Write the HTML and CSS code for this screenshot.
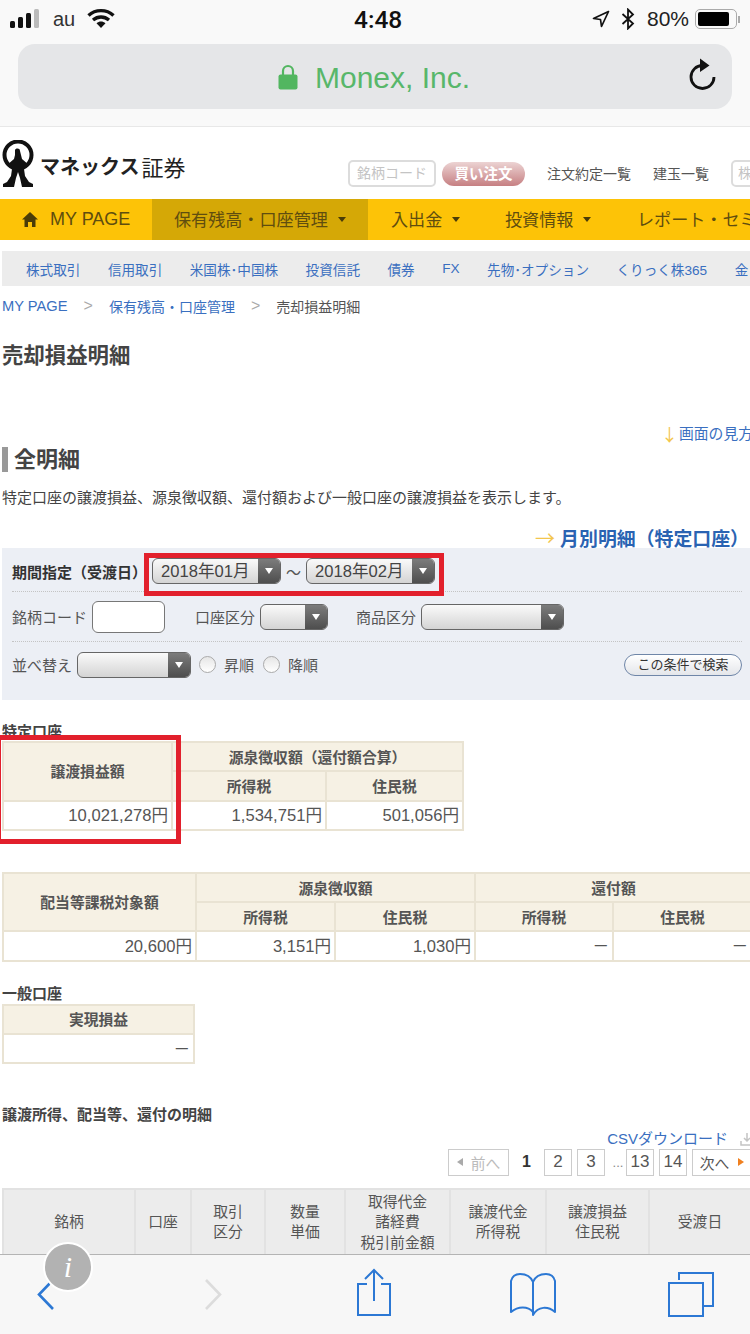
FILE: index.html
```html
<!DOCTYPE html>
<html lang="ja">
<head>
<meta charset="utf-8">
<title>売却損益明細</title>
<link rel="stylesheet" href="styles.css">
</head>
<body>
<div class="phone">
  <header class="chrome">
    <div class="status">
      <div class="status-left">
        <svg class="signal" width="30" height="20" viewBox="0 0 30 20"><rect x="0" y="12" width="5" height="7" rx="1.5" fill="#111"/><rect x="8" y="8" width="5" height="11" rx="1.5" fill="#111"/><rect x="16" y="4" width="5" height="15" rx="1.5" fill="#111"/><rect x="24" y="0" width="5" height="19" rx="1.5" fill="#bbb"/></svg>
        <span class="carrier">au</span>
        <svg class="wifi" width="28" height="20" viewBox="0 0 28 20"><path d="M1.5 7.5C8.5 1 19.5 1 26.5 7.5" fill="none" stroke="#111" stroke-width="3.4"/><path d="M6 12C10.800 8 17.200 8 22 12" fill="none" stroke="#111" stroke-width="3.400"/><path d="M9.500 15.200C12.300 13 15.700 13 18.500 15.200L14 20Z" fill="#111"/></svg>
      </div>
      <span class="clock">4:48</span>
      <div class="status-right">
        <svg width="18" height="18" viewBox="0 0 18 18"><path d="M16.500 1.500L1.500 8.500L8.500 9.500L9.500 16.500Z" fill="none" stroke="#111" stroke-width="1.700" stroke-linejoin="round"/></svg>
        <svg class="bt" width="14" height="22" viewBox="0 0 14 22"><path d="M1.500 6L12 15.500L7 20.500V1.500L12 6.500L1.500 16" fill="none" stroke="#111" stroke-width="1.800"/></svg>
        <span class="pct">80%</span>
        <div class="battery"><div class="battery-fill"></div></div>
        <span class="battery-tip"></span>
      </div>
    </div>
    <div class="urlbar">
      <div class="url-center">
        <svg width="20" height="26" viewBox="0 0 20 26"><path d="M5 11V7a5 5 0 0 1 10 0v4" fill="none" stroke="#52b660" stroke-width="2.200"/><rect x="0.500" y="10.500" width="19" height="15" rx="2" fill="#52b660"/></svg>
        <span class="url-text">Monex, Inc.</span>
      </div>
      <svg class="reload" width="30" height="34" viewBox="0 0 30 34"><path d="M15.500 7.500A11.500 11.500 0 1 0 27 19" fill="none" stroke="#111" stroke-width="2.800"/><path d="M13 0.500L22.500 7.500L13 14Z" fill="#111"/></svg>
    </div>
  </header>

  <main class="page">
    <div class="top">
      <div class="logo">
        <svg width="36" height="48" viewBox="0 0 36 48"><circle cx="18" cy="15" r="13.500" fill="none" stroke="#111" stroke-width="4"/><path d="M15 10C16 8 20 8 20 11L21 15L22 19L29 25L24 29L25 36L29 42L33 44V47H22L20 38L18 32L16 38L14 47H3V44L7 42L11 36L12 29L7 25L14 19L15 15Z" fill="#111"/></svg>
        <span class="logo-kana">マネックス</span><span class="logo-kanji">証券</span>
      </div>
      <div class="top-tools">
        <div class="code-box">銘柄コード</div>
        <div class="buy">買い注文</div>
        <a class="top-link first">注文約定一覧</a>
        <a class="top-link second">建玉一覧</a>
        <div class="code-box cut">株</div>
      </div>
    </div>

    <nav class="gnav">
      <div class="gnav-item home">
        <svg width="16" height="15" viewBox="0 0 16 15"><path d="M8 0L16 7.500H13.500V15H10V10H6V15H2.500V7.500H0Z" fill="#4a3c08"/></svg>
        <span>MY PAGE</span>
      </div>
      <div class="gnav-item active"><span>保有残高・口座管理</span><i class="caret"></i></div>
      <div class="gnav-item money"><span>入出金</span><i class="caret"></i></div>
      <div class="gnav-item info"><span>投資情報</span><i class="caret"></i></div>
      <div class="gnav-item report"><span>レポート・セミ</span></div>
    </nav>

    <nav class="subnav">
      <a>株式取引</a><a>信用取引</a><a>米国株･中国株</a><a>投資信託</a><a>債券</a><a>FX</a><a>先物･オプション</a><a>くりっく株365</a><a>金</a>
    </nav>

    <div class="crumbs">
      <a class="crumb-en">MY PAGE</a><span class="sep">&gt;</span><a>保有残高・口座管理</a><span class="sep">&gt;</span><span>売却損益明細</span>
    </div>

    <h1 class="title">売却損益明細</h1>

    <div class="howto"><span class="arrow-y">↓</span><a>画面の見方</a></div>

    <h2 class="section"><span>全明細</span></h2>
    <p class="lead">特定口座の譲渡損益、源泉徴収額、還付額および一般口座の譲渡損益を表示します。</p>

    <div class="monthly"><span class="arrow-y">→</span><a>月別明細（特定口座）</a></div>

    <section class="filter">
      <div class="f-row r1">
        <b class="f-date">期間指定（受渡日）</b>
        <div class="sel w129"><span>2018年01月</span><i><u></u></i></div>
        <span class="tilde">～</span>
        <div class="sel w129"><span>2018年02月</span><i><u></u></i></div>
      </div>
      <div class="f-row r2">
        <span>銘柄コード</span>
        <div class="input"></div>
        <span class="ml30">口座区分</span>
        <div class="sel w68"><span></span><i><u></u></i></div>
        <span class="ml28">商品区分</span>
        <div class="sel w143"><span></span><i><u></u></i></div>
      </div>
      <div class="f-row r3">
        <span>並べ替え</span>
        <div class="sel w114"><span></span><i><u></u></i></div>
        <i class="radio"></i><span>昇順</span>
        <i class="radio ml9"></i><span>降順</span>
        <div class="search-btn">この条件で検索</div>
      </div>
    </section>

    <div class="cap cap1">特定口座</div>
    <table class="tbl t1">
      <colgroup><col class="c169"><col class="c154"><col class="c137"></colgroup>
      <tr><th rowspan="2">譲渡損益額</th><th colspan="2">源泉徴収額（還付額合算）</th></tr>
      <tr><th>所得税</th><th>住民税</th></tr>
      <tr><td>10,021,278円</td><td>1,534,751円</td><td>501,056円</td></tr>
    </table>

    <table class="tbl t2">
      <colgroup><col class="c193"><col class="c139"><col class="c140"><col class="c138"><col class="c139"></colgroup>
      <tr><th rowspan="2">配当等課税対象額</th><th colspan="2">源泉徴収額</th><th colspan="2">還付額</th></tr>
      <tr><th>所得税</th><th>住民税</th><th>所得税</th><th>住民税</th></tr>
      <tr><td>20,600円</td><td>3,151円</td><td>1,030円</td><td>－</td><td>－</td></tr>
    </table>

    <div class="cap cap2">一般口座</div>
    <table class="tbl t3">
      <colgroup><col class="c191"></colgroup>
      <tr><th>実現損益</th></tr>
      <tr><td>－</td></tr>
    </table>

    <div class="cap cap3">譲渡所得、配当等、還付の明細</div>
    <div class="csv"><a>CSVダウンロード</a>
      <svg width="14" height="14" viewBox="0 0 14 14"><path d="M7 1V9M4 6L7 9L10 6M1 9V13H13V9" fill="none" stroke="#c4c4c4" stroke-width="1.500"/></svg>
    </div>
    <div class="pager">
      <div class="pg prev"><i class="tri-l"></i><span>前へ</span></div>
      <b class="cur">1</b>
      <div class="pg num">2</div>
      <div class="pg num">3</div>
      <span class="dots">...</span>
      <div class="pg num">13</div>
      <div class="pg num">14</div>
      <div class="pg next"><span>次へ</span><i class="tri-r"></i></div>
    </div>

    <table class="list">
      <colgroup><col class="l132"><col class="l56"><col class="l74"><col class="l80"><col class="l105"><col class="l96"><col class="l103"><col class="l102"></colgroup>
      <tr>
        <th>銘柄</th><th>口座</th><th>取引<br>区分</th><th>数量<br>単価</th><th>取得代金<br>諸経費<br>税引前金額</th><th>譲渡代金<br>所得税</th><th>譲渡損益<br>住民税</th><th>受渡日</th>
      </tr>
    </table>

    <div class="redbox rb1"></div>
    <div class="redbox rb2"></div>
  </main>

  <footer class="toolbar">
    <svg class="tb-back" width="20" height="34" viewBox="0 0 20 34"><path d="M17 2L3 16.500L17 31" fill="none" stroke="#2c78d4" stroke-width="2.600"/></svg>
    <svg class="tb-fwd" width="20" height="34" viewBox="0 0 20 34"><path d="M3 2L17 16.500L3 31" fill="none" stroke="#dcdcdc" stroke-width="2.600"/></svg>
    <svg class="tb-share" width="36" height="50" viewBox="0 0 36 50"><path d="M11 16H2V47H34V16H25M18 33V3M9 11L18 2L27 11" fill="none" stroke="#2c78d4" stroke-width="2"/></svg>
    <svg class="tb-book" width="48" height="46" viewBox="0 0 48 46"><path d="M24 40C19 34 9 34 2 40V9C3 5 6 2 11 2C17 2 22 5 24 10C26 5 31 2 37 2C42 2 45 5 46 9V40C39 34 29 34 24 43C24 42 24 41 24 40ZM24 10V42" fill="none" stroke="#2c78d4" stroke-width="2" stroke-linejoin="round"/></svg>
    <svg class="tb-tabs" width="46" height="46" viewBox="0 0 46 46"><path d="M11 9V2H45V35H36" fill="none" stroke="#2c78d4" stroke-width="2"/><rect x="1" y="12" width="34" height="33" fill="none" stroke="#2c78d4" stroke-width="2"/></svg>
    <div class="info-badge">i</div>
  </footer>
</div>
</body>
</html>
```

FILE: styles.css
```css
* { box-sizing: border-box; }
html, body { margin: 0; padding: 0; }
body {
  width: 750px;
  height: 1334px;
  overflow: hidden;
  background: #fff;
  color: #4a4a4a;
  font-family: "Liberation Sans", "Noto Sans CJK JP", sans-serif;
}
.phone { position: relative; display: flex; flex-direction: column; width: 750px; height: 1334px; overflow: hidden; }
a { color: #3a6fc0; text-decoration: none; }

/* browser chrome */
.chrome { flex: none; height: 127px; background: #f9f9f9; border-bottom: 1px solid #e8e8e8; padding: 0 18px; }
.status { display: flex; justify-content: space-between; align-items: center; height: 38px; position: relative; margin: 0 -18px; padding: 0 10px 0 10px; }
.status-left { display: flex; align-items: center; }
.signal { margin-right: 13px; }
.carrier { font-size: 20px; color: #333; margin-right: 12px; }
.wifi { margin-top: -3px; }
.clock { position: absolute; left: 354px; top: 5px; font-family: "Roboto", sans-serif; font-weight: 500; font-size: 24.500px; color: #111; }
.status-right { display: flex; align-items: center; }
.status-right .bt { margin: 0 12px 0 11px; }
.pct { font-size: 21px; color: #222; margin-right: 6px; }
.battery { width: 42px; height: 20px; border: 1.500px solid #aaa; border-radius: 5px; padding: 2px 7px 2px 2px; }
.battery-fill { width: 100%; height: 100%; background: #000; border-radius: 2px; }
.battery-tip { width: 2px; height: 7px; background: #aaa; margin-left: 1px; }
.urlbar { position: relative; display: flex; justify-content: center; align-items: center; height: 65px; margin-top: 6px; background: #e5e6e8; border-radius: 17px; }
.url-center { display: flex; align-items: center; gap: 17px; margin-left: -2px; }
.url-text { font-size: 30px; color: #58b76a; margin-top: 2px; }
.reload { position: absolute; right: 15px; top: 14px; }

/* page */
.page { position: relative; flex: 1; min-height: 0; overflow: hidden; }
.top { display: flex; height: 72px; }
.logo { display: flex; align-items: center; flex: none; width: 348px; padding-bottom: 3px; color: #222; }
.logo svg { margin: 5px 4px 0 0; flex: none; }
.logo-kana { font-size: 20px; font-weight: 700; margin-top: 8px; }
.logo-kanji { font-size: 22px; margin-top: 8px; margin-left: 2px; }
.top-tools { display: flex; align-items: center; flex: none; padding-top: 20px; white-space: nowrap; }
.code-box { width: 88px; height: 27px; border: 2px solid #dcdcdc; border-radius: 5px; font-size: 14px; line-height: 23px; color: #c4c4c4; text-align: center; flex: none; }
.code-box.cut { width: 40px; margin-left: 22px; padding-right: 12px; }
.buy { width: 83px; height: 24px; margin-left: 6px; border-radius: 12px; background: linear-gradient(#ecd3d3, #c67f82); color: #fff; font-size: 14.500px; font-weight: 700; line-height: 25px; text-align: center; margin-top: 2px; flex: none; }
.top-link { font-size: 14px; color: #555; }
.top-link.first { margin-left: 22px; }
.top-link.second { margin-left: 22px; }

.gnav { display: flex; height: 41px; background: #fdc307; color: #5f4d0f; font-size: 17.100px; white-space: nowrap; }
.gnav-item { display: flex; align-items: center; flex: none; padding-bottom: 3px; }
.gnav-item .caret { display: block; width: 0; height: 0; border: 4.500px solid transparent; border-top: 5.500px solid #4a3c08; border-bottom: 0; margin-left: 10px; margin-top: 2px; }
.home { width: 152px; padding-left: 22px; gap: 12px; font-size: 18px; padding-bottom: 0; }
.active { width: 216px; padding-left: 22px; background: #d5a806; }
.money { width: 137px; padding-left: 23px; }
.info { width: 132px; padding-left: 0; }
.report { padding-left: 0; }

.subnav { display: flex; gap: 27.500px; height: 35px; margin: 11px 0 0 2px; padding-left: 24px; background: #ececec; align-items: center; font-size: 13.600px; white-space: nowrap; }
.subnav a { flex: none; }

.crumbs { display: flex; align-items: center; height: 20px; margin-top: 10px; padding-left: 2px; font-size: 14px; color: #555; white-space: nowrap; }
.crumbs a { font-size: 14px; }
.crumbs .crumb-en { font-size: 14.700px; }
.sep { color: #aaa; font-size: 16px; margin: 0 16px; }
.title { margin: 26px 0 0 2px; font-size: 21.400px; line-height: 28px; font-weight: 700; color: #444; }

.howto { display: flex; justify-content: flex-end; align-items: center; height: 20px; margin-top: 54px; margin-right: -3px; font-size: 14.800px; line-height: 20px; white-space: nowrap; }
.arrow-y { color: #f3c64d; font-family: "Noto Sans CJK JP", sans-serif; }
.howto .arrow-y { font-size: 17px; margin-right: 1px; }
.section { margin: 3px 0 0 2px; height: 25px; border-left: 6px solid #999; padding-left: 6px; font-size: 22px; line-height: 25px; font-weight: 700; color: #444; }
.lead { margin: 15px 0 0 2px; font-size: 15px; line-height: 22px; color: #444; white-space: nowrap; }
.monthly { display: flex; justify-content: flex-end; align-items: center; gap: 5px; height: 26px; margin-top: 15px; padding-right: 1px; font-size: 18.900px; font-weight: 700; }
.monthly a { color: #2a63b2; }
.monthly .arrow-y { font-weight: 400; font-size: 20px; }

.filter { margin: -2px 0 0 2px; height: 152px; padding: 0 8px 0 10px; background: #eceff5; font-size: 15px; color: #555; }
.f-row { display: flex; align-items: center; white-space: nowrap; }
.r1 { height: 44px; border-bottom: 1px dotted #c4c4c4; padding-top: 3px; }
.r2 { height: 50px; border-bottom: 1px dotted #c4c4c4; }
.r3 { height: 48px; padding-bottom: 3px; }
.f-date { font-size: 15px; color: #333; width: 140px; flex: none; }
.tilde { width: 25px; text-align: center; font-size: 15px; color: #555; flex: none; }
.sel { display: flex; flex: none; height: 26px; border: 1px solid #666; border-radius: 6px; overflow: hidden; background: linear-gradient(#fafafa, #d4d4d4); }
.sel span { flex: 1; padding: 1px 0 0 8px; font-size: 16.600px; line-height: 24px; color: #444; white-space: nowrap; }
.sel i { display: flex; align-items: center; justify-content: center; width: 22px; flex: none; background: linear-gradient(#7c7c7c, #4e4e4e); }
.sel u { display: block; width: 0; height: 0; border: 4.500px solid transparent; border-top: 6px solid #fff; border-bottom: 0; }
.w129 { width: 129px; }
.w68 { width: 68px; margin-left: 5px; }
.w143 { width: 143px; margin-left: 5px; }
.w114 { width: 114px; margin-left: 5px; margin-right: 8px; }
.input { width: 73px; height: 32px; margin-left: 5px; border: 1px solid #777; border-radius: 6px; background: #fff; flex: none; }
.ml30 { margin-left: 30px; }
.ml28 { margin-left: 28px; }
.ml9 { margin-left: 9px; }
.radio { display: block; width: 17px; height: 17px; margin-right: 8px; border: 1px solid #aaa; border-radius: 50%; background: linear-gradient(#e6e6e6, #fff); flex: none; }
.search-btn { width: 118px; height: 22px; margin-left: auto; border: 1px solid #6f86a8; border-radius: 11px; background: linear-gradient(#fff, #e4e6ea); font-size: 13px; line-height: 20px; text-align: center; color: #333; }

.cap { font-size: 15px; font-weight: 700; color: #444; line-height: 20px; white-space: nowrap; margin-left: 2px; }
.cap1 { margin-top: 22px; height: 19px; }
.cap2 { margin-top: 22px; height: 20px; }
.cap3 { margin-top: 41px; }

.tbl { border-collapse: collapse; table-layout: fixed; margin-left: 2px; background: #fff; }
.tbl th, .tbl td { border: 2px solid #e9e3d3; height: 29.300px; padding: 2px 3px 0; font-size: 14.800px; line-height: 18px; }
.tbl th { background: #f6f1e4; color: #555; font-weight: 700; text-align: center; }
.tbl td { font-size: 16.600px; color: #555; text-align: right; }
.t1 { width: 460px; }
.t2 { width: 749px; margin-top: 41px; }
.t3 { width: 191px; }
.c169 { width: 169px; } .c154 { width: 154px; } .c137 { width: 137px; }
.c193 { width: 193px; } .c139 { width: 139px; } .c140 { width: 140px; } .c138 { width: 138px; }
.c191 { width: 191px; }

.csv { display: flex; justify-content: flex-end; align-items: center; gap: 12px; height: 20px; margin-top: 4px; margin-right: -4px; font-size: 15px; line-height: 20px; }
.pager { display: flex; justify-content: flex-end; align-items: center; height: 28px; margin-top: -1px; margin-right: -2px; font-size: 17px; color: #555; }
.pg { height: 27px; border: 1px solid #ccc; display: flex; align-items: center; justify-content: center; flex: none; }
.num { width: 28px; margin-left: 5px; }
.prev { width: 61px; color: #bbb; font-size: 14.800px; gap: 8px; }
.next { width: 60px; font-size: 14.800px; gap: 9px; margin-left: 5px; }
.cur { width: 35px; text-align: center; color: #333; font-size: 16px; }
.cur + .num { margin-left: 0; }
.dots { width: 16px; margin-left: 5px; margin-right: -5px; text-align: center; font-size: 13px; color: #888; }
.tri-l { display: block; width: 0; height: 0; border: 4px solid transparent; border-right: 6px solid #aaa; border-left: 0; }
.tri-r { display: block; width: 0; height: 0; border: 4px solid transparent; border-left: 6px solid #f08020; border-right: 0; }

.list { width: 748px; margin: 12px 0 0 2px; border-collapse: collapse; table-layout: fixed; }
.list th { height: 65px; padding: 0; border: 2px solid #e2e2e2; border-bottom: 0; background: #ececec; font-size: 14.800px; line-height: 20.500px; font-weight: 400; color: #555; text-align: center; white-space: nowrap; }
.l132 { width: 132px; } .l56 { width: 56px; } .l74 { width: 74px; } .l80 { width: 80px; } .l105 { width: 105px; } .l96 { width: 96px; } .l103 { width: 103px; } .l102 { width: 102px; }

.redbox { position: absolute; border: 5px solid #e2202c; pointer-events: none; }
.rb1 { left: 144px; top: 426px; width: 300px; height: 43px; }
.rb2 { left: -4px; top: 608px; width: 185px; height: 109px; }

/* toolbar */
.toolbar { position: relative; flex: none; height: 80px; display: flex; align-items: center; padding-left: 36px; background: #f7f7f7; border-top: 1px solid #b4b4b4; }
.toolbar svg { flex: none; }
.tb-fwd { margin-left: 147px; }
.tb-share { margin: -4px 0 0 133px; }
.tb-book { margin-left: 117px; }
.tb-tabs { margin: -2px 0 0 111px; }
.info-badge { position: absolute; left: 43px; top: -13px; width: 50px; height: 50px; border: 2px solid #fff; border-radius: 50%; background: #b2b2b2; color: #fff; font-family: "Liberation Serif", serif; font-style: italic; font-size: 30px; line-height: 46px; text-align: center; }
```
